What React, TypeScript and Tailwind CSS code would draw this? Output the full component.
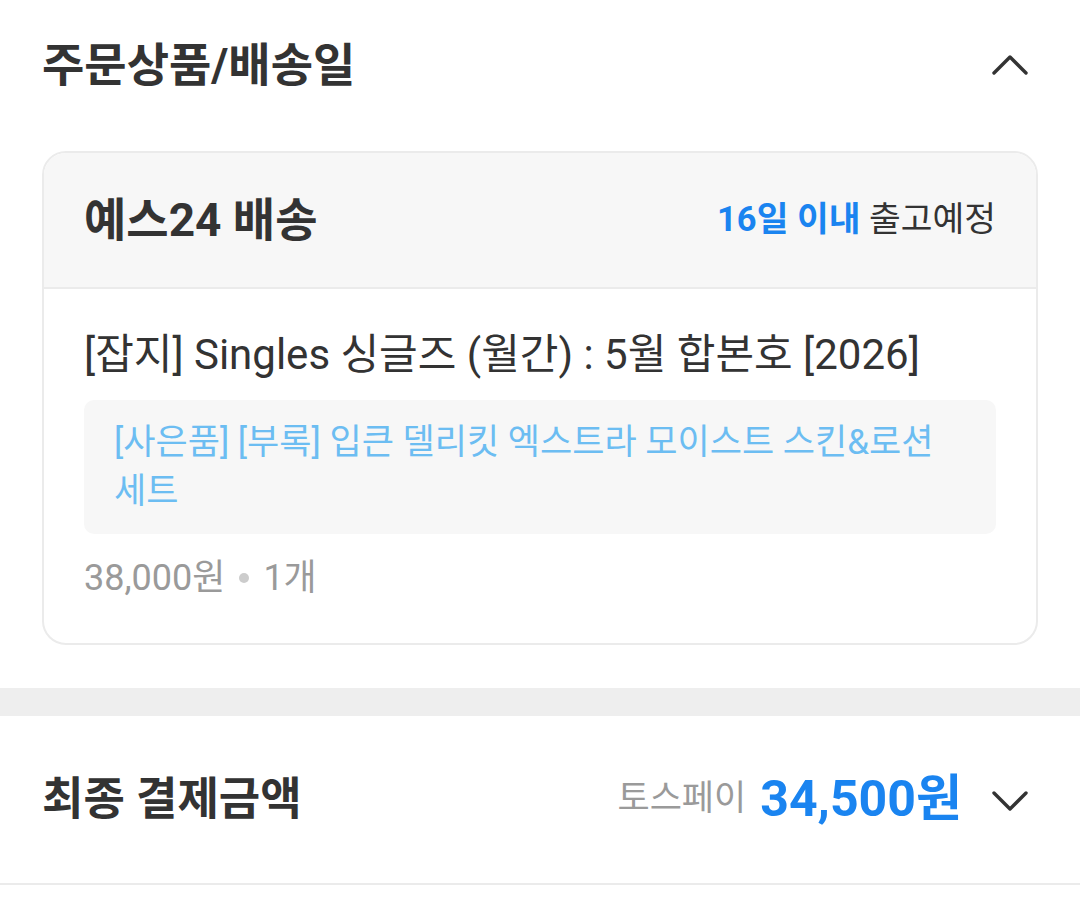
const Chevron = ({ up }: { up?: boolean }) => (
    <svg width="36" height="36" viewBox="0 0 36 36" fill="none" className="shrink-0">
        <path
            d={up ? "M2 26 L18 10 L34 26" : "M2 11 L18 27 L34 11"}
            stroke="#333333"
            strokeWidth="3.4"
            strokeLinecap="round"
            strokeLinejoin="round"
        />
    </svg>
);

const App = () => {
    return (
        <div
            className="w-[1080px] h-[918px] bg-white text-[#333333] overflow-hidden"
            style={{ fontFamily: 'Roboto, "Noto Sans CJK KR", sans-serif' }}
        >
            <section className="px-[42px]">
                <div className="h-[130px] flex items-center justify-between">
                    <h2 className="text-[46px] font-bold">주문상품/배송일</h2>
                    <div className="mr-[10px]">
                        <Chevron up />
                    </div>
                </div>

                <div className="mt-[21px] border-2 border-[#ebebeb] rounded-[24px] overflow-hidden">
                    <div className="h-[136px] bg-[#f7f7f7] border-b-2 border-[#ebebeb] flex items-center justify-between px-[40px]">
                        <span className="text-[46px] font-bold">예스24 배송</span>
                        <span className="text-[34.5px]">
                            <span className="font-bold text-[#1a84f0]">16일 이내</span> 출고예정
                        </span>
                    </div>
                    <div className="px-[40px] pt-[42px] pb-[42px]">
                        <p className="text-[42px] leading-[48px]">
                            [잡지] Singles 싱글즈 (월간) : 5월 합본호 [2026]
                        </p>
                        <div className="mt-[21px] bg-[#f7f7f7] rounded-[10px] px-[30px] py-[18px]">
                            <p className="text-[35px] leading-[49px] text-[#6cbdf2]">
                                [사은품] [부록] 입큰 델리킷 엑스트라 모이스트 스킨&amp;로션 세트
                            </p>
                        </div>
                        <p className="mt-[21px] text-[36px] leading-[46px] text-[#9a9a9a] flex items-center">
                            38,000원
                            <span className="inline-block w-[10px] h-[10px] rounded-full bg-[#cccccc] mx-[14px]" />
                            1개
                        </p>
                    </div>
                </div>
            </section>

            <div className="mt-[43px] h-[28px] bg-[#eeeeee]" />

            <section className="h-[169px] px-[42px] flex items-center justify-between border-b-2 border-[#ebebeb]">
                <h2 className="text-[45px] font-bold">최종 결제금액</h2>
                <div className="flex items-center">
                    <span className="text-[35px] text-[#9a9a9a]">토스페이</span>
                    <span className="ml-[14px] text-[50px] font-bold text-[#1a84f0]">34,500원</span>
                    <div className="ml-[30px] mr-[10px]">
                        <Chevron />
                    </div>
                </div>
            </section>
        </div>
    );
};

export default App;
